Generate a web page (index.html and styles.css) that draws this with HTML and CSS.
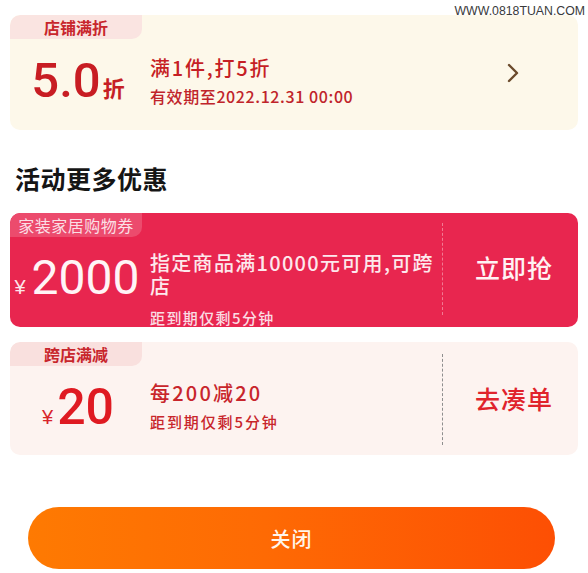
FILE: index.html
```html
<!DOCTYPE html>
<html lang="zh-CN">
<head>
<meta charset="utf-8">
<title>优惠券</title>
<link rel="stylesheet" href="styles.css">
</head>
<body>
<div class="page">
  <div class="watermark">WWW.0818TUAN.COM</div>

  <div class="coupon coupon-shop">
    <div class="main">
      <div class="tag">店铺满折</div>
      <div class="body">
        <div class="price"><span class="num">5.0</span><span class="unit-after">折</span></div>
        <div class="info">
          <div class="title">满1件,打5折</div>
          <div class="sub">有效期至2022.12.31 00:00</div>
        </div>
      </div>
    </div>
    <div class="action">
      <svg class="arrow" width="12" height="20" viewBox="0 0 12 20"><path d="M2 2 L10 10 L2 18" fill="none" stroke="#6b4a2c" stroke-width="2.4" stroke-linecap="round" stroke-linejoin="round"/></svg>
    </div>
  </div>

  <h2 class="section-title">活动更多优惠</h2>

  <div class="coupon coupon-red">
    <div class="main">
      <div class="tag">家装家居购物券</div>
      <div class="body">
        <div class="price"><span class="yen">¥</span><span class="num">2000</span></div>
        <div class="info">
          <div class="title">指定商品满10000元可用,可跨店</div>
          <div class="sub">距到期仅剩5分钟</div>
        </div>
      </div>
    </div>
    <div class="action divided">立即抢</div>
  </div>

  <div class="coupon coupon-cross">
    <div class="main">
      <div class="tag">跨店满减</div>
      <div class="body">
        <div class="price"><span class="yen">¥</span><span class="num">20</span></div>
        <div class="info">
          <div class="title">每200减20</div>
          <div class="sub">距到期仅剩5分钟</div>
        </div>
      </div>
    </div>
    <div class="action divided">去凑单</div>
  </div>

  <div class="footer">
    <button class="close-btn">关闭</button>
  </div>
</div>
</body>
</html>
```

FILE: styles.css
```css
* { box-sizing: border-box; }

html, body {
  margin: 0;
  padding: 0;
  background: #ffffff;
}

body {
  font-family: "Noto Sans CJK SC", "Noto Sans", sans-serif;
  width: 588px;
  height: 573px;
  overflow: hidden;
}

.page {
  position: relative;
  padding: 15px 10px 0 10px;
}

.watermark {
  position: absolute;
  top: 3px;
  right: 3px;
  font-family: "Liberation Sans", Arial, sans-serif;
  font-size: 12.3px;
  line-height: 16px;
  color: #3a3a3a;
}

.coupon {
  display: flex;
  border-radius: 10px;
  overflow: hidden;
}

.main {
  width: 432px;
  display: flex;
  flex-direction: column;
}

.tag {
  width: 132px;
  height: 24px;
  line-height: 24px;
  text-align: center;
  font-size: 16px;
  font-weight: 700;
  border-radius: 10px 0 10px 0;
}

.body {
  flex: 1;
  display: flex;
  align-items: center;
  padding-bottom: 8px;
}

.price {
  width: 136px;
  display: flex;
  justify-content: center;
  align-items: baseline;
  font-family: Roboto, "Liberation Sans", Arial, sans-serif;
}

.price .num {
  font-size: 49px;
  line-height: 50px;
  font-weight: 500;
}

.price .yen {
  font-family: "Liberation Sans", Arial, sans-serif;
  font-size: 20px;
  margin-right: 4px;
}

.price .unit-after {
  font-family: "Noto Sans CJK SC", sans-serif;
  font-size: 22px;
  font-weight: 700;
  margin-left: 2px;
}

.info {
  margin-left: 4px;
  flex: 1;
}

.title {
  font-size: 20px;
  line-height: 24px;
  font-weight: 700;
  letter-spacing: 1.8px;
}

.sub {
  font-size: 16px;
  line-height: 20px;
  font-weight: 700;
  letter-spacing: 0.6px;
  margin-top: 6px;
}

.action {
  flex: 1;
  display: flex;
  align-items: center;
  justify-content: center;
  font-size: 25px;
  font-weight: 700;
  letter-spacing: 1px;
  padding-bottom: 4px;
}

.action.divided {
  margin: 10px 0;
  padding-left: 7px;
  border-left: 1px dashed;
}

/* Card 1: shop discount */
.coupon-shop {
  height: 115px;
  background: #fdf8ea;
  color: #c61f25;
}
.coupon-shop .tag {
  background: #fae4e1;
  color: #c8262c;
}
.coupon-shop .price .num { color: #c81d23; }
.coupon-shop .arrow { margin-left: 6px; margin-top: 4px; }
.coupon-shop .title { font-weight: 500; }
.coupon-shop .sub { font-weight: 500; color: #c0242a; }

/* Section heading */
.section-title {
  margin: 33px 0 20px 5px;
  font-size: 25px;
  line-height: 30px;
  font-weight: 700;
  color: #151515;
  letter-spacing: 0.5px;
}

/* Card 2: red voucher */
.coupon-red {
  height: 114px;
  background: #e8264f;
  color: #fde8ec;
}
.coupon-red .tag {
  background: #ec4b6d;
  color: #fbdfe5;
  font-weight: 400;
  letter-spacing: 0.5px;
}
.coupon-red .body {
  align-items: flex-start;
  padding-bottom: 0;
}
.coupon-red .price {
  margin-top: 16px;
  padding-right: 2px;
}
.coupon-red .price .num {
  font-size: 48px;
  font-weight: 400;
  color: #fff4f6;
}
.coupon-red .price .yen { color: #fde6ea; margin-right: 6px; }
.coupon-red .info {
  width: 290px;
  flex: none;
  margin-top: 14px;
}
.coupon-red .title {
  line-height: 23px;
  font-weight: 500;
  color: #fde8ec;
  letter-spacing: 1.3px;
}
.coupon-red .sub {
  font-size: 15px;
  line-height: 18px;
  margin-top: 12px;
  font-weight: 500;
  letter-spacing: 1.4px;
  color: #fbdce3;
}
.coupon-red .action {
  border-left-color: #f27a92;
  color: #fff2f4;
  font-weight: 500;
  margin: 10px 0 12px 0;
}

/* Card 3: cross-shop */
.coupon-cross {
  height: 113px;
  margin-top: 15px;
  background: #fdf3f0;
  color: #c8252b;
}
.coupon-cross .tag {
  background: #f9e0de;
  color: #c8262c;
}
.coupon-cross .price .num {
  font-size: 50px;
  color: #df1a22;
}
.coupon-cross .price .yen { color: #d8242a; }
.coupon-cross .title { letter-spacing: 2.2px; font-weight: 500; }
.coupon-cross .sub { font-size: 15px; letter-spacing: 1.9px; margin-top: 7px; font-weight: 500; }
.coupon-cross .action {
  border-left-color: #8e8e8e;
  color: #e0232b;
  font-weight: 500;
  margin: 12px 0 10px 0;
}

/* Close button */
.footer {
  display: flex;
  justify-content: center;
  margin-top: 52px;
  padding-right: 5px;
}

.close-btn {
  width: 527px;
  height: 62px;
  border: none;
  border-radius: 31px;
  background: linear-gradient(90deg, #fe7a02 0%, #fe6a04 45%, #fd4f04 100%);
  color: #fff6ec;
  font-family: "Noto Sans CJK SC", sans-serif;
  font-size: 20px;
  font-weight: 500;
  letter-spacing: 1px;
  padding: 0;
}
```
